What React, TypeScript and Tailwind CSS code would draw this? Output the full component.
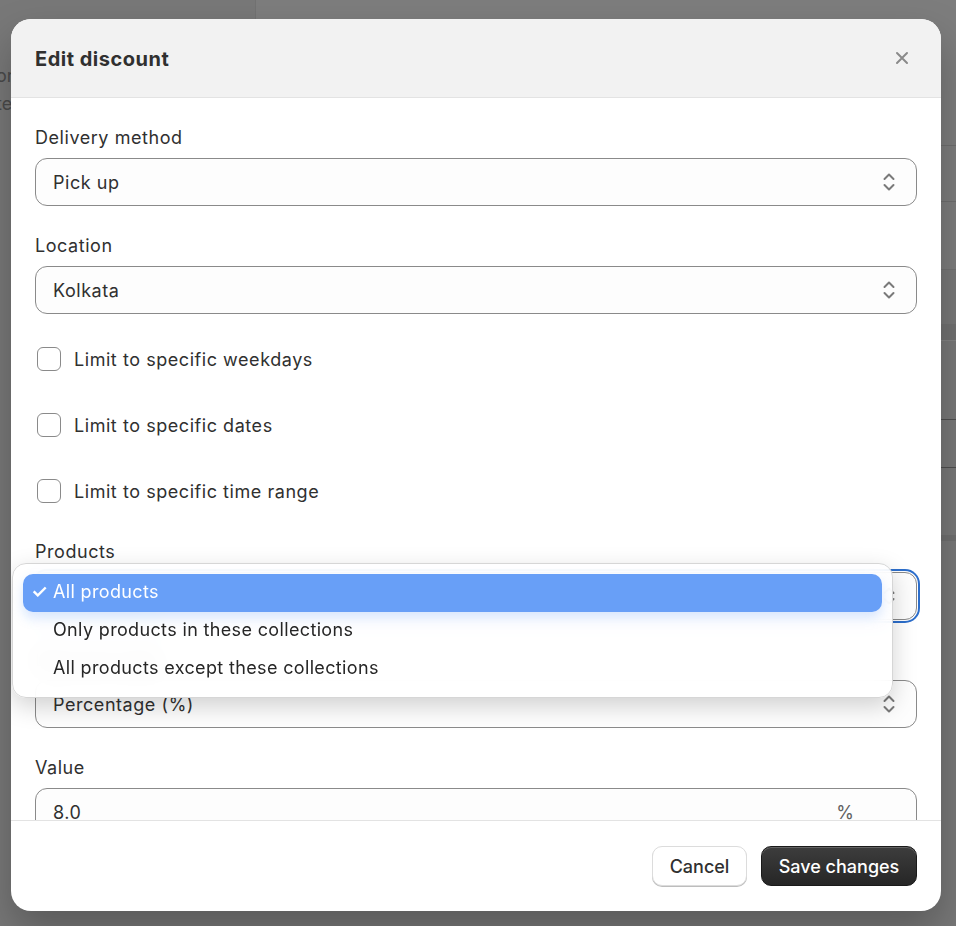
import React from 'react';

const font = { fontFamily: 'Inter, "Noto Sans", sans-serif' };

const Chevrons: React.FC = () => (
  <svg width="14" height="22" viewBox="0 0 14 22" fill="none" stroke="#7a7a7a" strokeWidth="2" strokeLinecap="round" strokeLinejoin="round">
    <path d="M2.5 8 L7 3.5 L11.5 8" />
    <path d="M2.5 14 L7 18.5 L11.5 14" />
  </svg>
);

const Field: React.FC<{ label: string; value: string; focused?: boolean; suffix?: string }> = ({ label, value, focused, suffix }) => (
  <div className="flex flex-col gap-[8px]">
    <span className="text-[18px] leading-[24px] tracking-[0.55px] text-[#303030]">{label}</span>
    <div
      className={
        focused
          ? 'h-[48px] rounded-[12px] border border-[#8a8a8a] bg-[#fdfdfd] pl-[17px] pr-[20px] flex items-center justify-between ring-2 ring-[#2c6ecb] ring-offset-1'
          : 'h-[48px] rounded-[12px] border border-[#8a8a8a] bg-[#fdfdfd] pl-[17px] pr-[20px] flex items-center justify-between'
      }
    >
      <span className="text-[18px] tracking-[0.55px] text-[#303030]">{value}</span>
      {suffix ? <span className="text-[18px] text-[#616161] mr-[42px]">{suffix}</span> : <Chevrons />}
    </div>
  </div>
);

const Check: React.FC<{ label: string }> = ({ label }) => (
  <label className="h-[44px] flex items-center gap-[13px] pl-[2px]">
    <span className="w-[24px] h-[24px] rounded-[6px] border border-[#8a8a8a] bg-white" />
    <span className="text-[18px] tracking-[0.55px] text-[#303030]">{label}</span>
  </label>
);

const options = ['All products', 'Only products in these collections', 'All products except these collections'];

export default function App() {
  return (
    <div className="relative h-[926px] w-[956px] overflow-hidden bg-[#787878]" style={font}>
      {/* page behind the overlay */}
      <div className="absolute left-[255px] top-[-30px] w-[800px] h-[300px] rounded-[24px] border border-[#727272] bg-[#7d7d7d]" />
      <div className="absolute left-[-4px] top-[62px] text-[18px] leading-[28px] text-[#4a4a4a]">
        <div>or</div>
        <div>te</div>
      </div>
      <div className="absolute left-[941px] top-0 w-[15px] h-full flex flex-col">
        <div className="h-[145px]" />
        <div className="h-[56px] border-t border-[#6e6e6e]" />
        <div className="h-[123px] border-t border-[#6e6e6e]" />
        <div className="h-[16px] bg-[#717171]" />
        <div className="h-[79px] border-t border-[#838383]" />
        <div className="h-[48px] border-t border-[#4f4f4f]" />
        <div className="h-[68px] border-t border-[#4f4f4f]" />
        <div className="h-[6px] bg-[#6f6f6f]" />
      </div>

      {/* modal */}
      <div className="relative ml-[11px] mt-[19px] w-[930px] h-[892px] rounded-[20px] bg-white overflow-hidden flex flex-col shadow-[0_20px_40px_rgba(0,0,0,0.25)]">
        <div className="h-[79px] shrink-0 bg-[#f2f2f2] border-b border-[#e3e3e3] pl-[24px] pr-[32px] flex items-center justify-between">
          <h1 className="text-[20px] font-bold text-[#303030] tracking-[0.5px] pt-[1px]">Edit discount</h1>
          <svg width="14" height="14" viewBox="0 0 14 14" stroke="#8a8a8a" strokeWidth="2" strokeLinecap="round">
            <path d="M2 2 L12 12 M12 2 L2 12" />
          </svg>
        </div>

        <div className="relative flex-1 overflow-hidden px-[24px] pt-[28px]">
          <div className="flex flex-col gap-[28px]">
            <Field label="Delivery method" value="Pick up" />
            <Field label="Location" value="Kolkata" />
          </div>
          <div className="flex flex-col gap-[22px] mt-[23px]">
            <Check label="Limit to specific weekdays" />
            <Check label="Limit to specific dates" />
            <Check label="Limit to specific time range" />
          </div>
          <div className="flex flex-col gap-[28px] mt-[27px]">
            <Field label="Products" value="All products" focused />
            <Field label="Discount type" value="Percentage (%)" />
            <Field label="Value" value="8.0" suffix="%" />
          </div>

          {/* open select menu */}
          <div className="absolute left-[1px] top-[465px] w-[881px] rounded-[14px] border border-[#d6d6d6] bg-white/90 backdrop-blur-md shadow-[0_8px_24px_rgba(0,0,0,0.18)] px-[10px] pt-[10px] pb-[9px]">
            {options.map((o, i) => (
              <div
                key={o}
                className={
                  i === 0
                    ? 'h-[38px] rounded-[10px] bg-[#689ff7] text-white flex items-center text-[18px] tracking-[0.35px] pl-[8px] pb-[3px] shadow-[0_6px_12px_rgba(104,159,247,0.25)]'
                    : 'h-[38px] rounded-[10px] text-[#262626] flex items-center text-[18px] tracking-[0.35px] pl-[8px] pb-[3px]'
                }
              >
                <span className="w-[22px] text-[19px] font-semibold leading-none">{i === 0 ? '✓' : ''}</span>
                <span>{o}</span>
              </div>
            ))}
          </div>
        </div>

        <div className="h-[91px] shrink-0 border-t border-[#e3e3e3] px-[24px] flex items-center justify-end gap-[14px]">
          <button className="h-[40px] w-[95px] rounded-[10px] border border-[#dcdcdc] bg-white text-[18px] font-medium text-[#303030] shadow-[0_1px_0_#bdbdbd]">
            Cancel
          </button>
          <button className="h-[40px] w-[156px] rounded-[10px] border border-[#1a1a1a] bg-gradient-to-b from-[#3d3d3d] to-[#262626] text-[18px] font-medium text-white shadow-[inset_0_1px_0_rgba(255,255,255,0.2)]">
            Save changes
          </button>
        </div>
      </div>
    </div>
  );
}
